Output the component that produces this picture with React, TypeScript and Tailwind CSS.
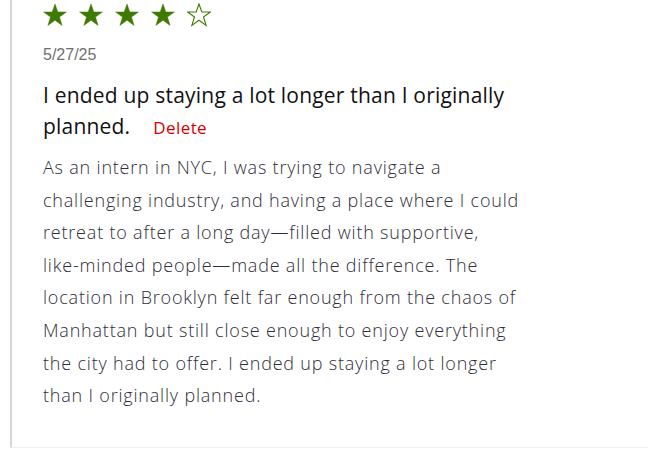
import React from "react";

const lines = [
  "As an intern in NYC, I was trying to navigate a",
  "challenging industry, and having a place where I could",
  "retreat to after a long day\u2014filled with supportive,",
  "like-minded people\u2014made all the difference. The",
  "location in Brooklyn felt far enough from the chaos of",
  "Manhattan but still close enough to enjoy everything",
  "the city had to offer. I ended up staying a lot longer",
  "than I originally planned.",
];

const STAR = "12,1 14.8,9 23.4,9 16.5,14 19.1,22.4 12,17.2 4.9,22.4 7.5,14 0.6,9 9.2,9";

function Star({ filled }: { filled: boolean }) {
  return (
    <svg width="24" height="24" viewBox="0 0 24 24" className="block">
      <polygon
        points={STAR}
        fill={filled ? "#3f7a00" : "none"}
        stroke="#3f7a00"
        strokeWidth={filled ? 0.5 : 1.1}
        strokeLinejoin="miter"
      />
    </svg>
  );
}

export default function App() {
  const stars = [true, true, true, true, false];
  return (
    <div className="w-[648px] h-[449px] bg-white overflow-hidden">
      <div className="ml-[10px] h-[448px] border-l-2 border-[#d6d6d6] border-b border-b-[#f0f0f0] pl-[31px]">
        <div className="flex gap-[12px] pt-[3px] h-[30px]">
          {stars.map((f, i) => (
            <Star key={i} filled={f} />
          ))}
        </div>
        <div className="mt-[16px] text-[16px] leading-[18px] text-[#707070]" style={{ fontFamily: '"Liberation Sans", sans-serif' }}>
          5/27/25
        </div>
        <div className="mt-[16px] text-[21px] leading-[31px] tracking-[0.2px] text-[#111]" style={{ fontFamily: '"Open Sans", sans-serif' }}>
          <div className="whitespace-nowrap">I ended up staying a lot longer than I originally</div>
          <div className="flex items-baseline gap-[23px]">
            <span>planned.</span>
            <span className="text-[17px] tracking-[0.4px] text-[#d40000]">Delete</span>
          </div>
        </div>
        <div className="mt-[8px] text-[18px] leading-[32.6px] tracking-[0.8px] text-[#2f2d3a] font-light" style={{ fontFamily: '"Open Sans", sans-serif' }}>
          {lines.map((l, i) => (
            <div key={i} className="whitespace-nowrap">{l}</div>
          ))}
        </div>
      </div>
    </div>
  );
}
